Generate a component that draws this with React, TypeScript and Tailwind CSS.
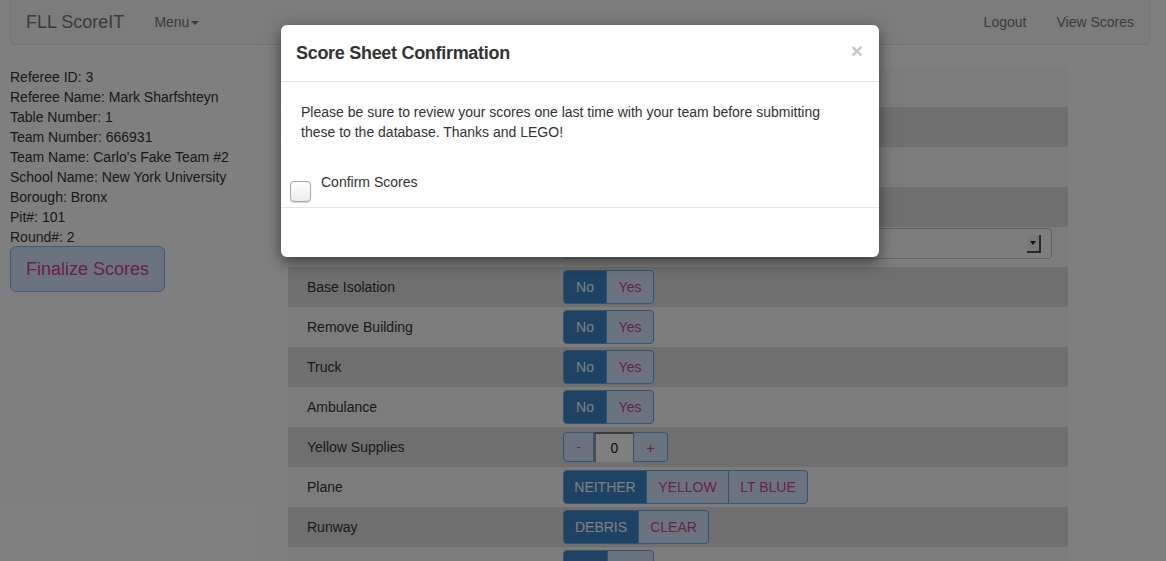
import React from 'react';

// Referee / team details shown in the left column
const info = [
  'Referee ID: 3',
  'Referee Name: Mark Sharfshteyn',
  'Table Number: 1',
  'Team Number: 666931',
  "Team Name: Carlo's Fake Team #2",
  'School Name: New York University',
  'Borough: Bronx',
  'Pit#: 101',
  'Round#: 2',
];

type Row =
  | { label: string; kind: 'toggle'; options: string[]; widths: number[]; top?: boolean }
  | { label: string; kind: 'counter' }
  | { label: string; kind: 'select' }
  | { label: string; kind: 'blank' };

// rows 1-5 sit behind the modal, so their labels are left out
const rows: Row[] = [
  { label: '', kind: 'blank' },
  { label: '', kind: 'blank' },
  { label: '', kind: 'blank' },
  { label: '', kind: 'blank' },
  { label: '', kind: 'select' },
  { label: 'Base Isolation', kind: 'toggle', options: ['No', 'Yes'], widths: [44, 48] },
  { label: 'Remove Building', kind: 'toggle', options: ['No', 'Yes'], widths: [44, 48] },
  { label: 'Truck', kind: 'toggle', options: ['No', 'Yes'], widths: [44, 48] },
  { label: 'Ambulance', kind: 'toggle', options: ['No', 'Yes'], widths: [44, 48] },
  { label: 'Yellow Supplies', kind: 'counter' },
  { label: 'Plane', kind: 'toggle', options: ['NEITHER', 'YELLOW', 'LT BLUE'], widths: [84, 83, 80] },
  { label: 'Runway', kind: 'toggle', options: ['DEBRIS', 'CLEAR'], widths: [76, 71] },
  { label: '', kind: 'toggle', options: ['', ''], widths: [45, 47], top: true },
];

const Toggle = ({ options, widths }: { options: string[]; widths: number[] }) => (
  <div className="flex h-[34px]">
    {options.map((opt, i) => (
      <div
        key={i}
        style={{ width: widths[i] }}
        className={`flex items-center justify-center border border-[#5fa8ec] text-[14px] ${
          i === 0 ? 'rounded-l-[4px] bg-[#3a85c6] text-white' : 'bg-[#d7e9fc] text-[#d43e90]'
        } ${i === options.length - 1 ? 'rounded-r-[4px]' : ''} ${i > 0 ? '-ml-px' : ''}`}
      >
        {opt}
      </div>
    ))}
  </div>
);

const Counter = () => (
  <div className="flex h-[30px]">
    <div className="flex w-[31px] items-center justify-center rounded-l-[4px] border border-[#5fa8ec] bg-[#d7e9fc] text-[14px] text-[#d43e90]">
      -
    </div>
    <div className="flex w-[39px] items-center justify-center border-t-2 border-l-2 border-t-[#777] border-l-[#999] bg-white text-[14px] text-[#222]">
      0
    </div>
    <div className="flex w-[35px] items-center justify-center rounded-r-[4px] border border-[#5fa8ec] bg-[#d7e9fc] pt-[3px] text-[14px] text-[#d43e90]">
      +
    </div>
  </div>
);

const Select = () => (
  <div className="mt-[1px] flex h-[31px] w-[489px] items-center justify-end rounded-[4px] border border-[#c4c4c4] bg-[#fbfbfb] pr-[10px]">
    <div className="flex h-[18px] w-[14px] items-center justify-center border-r-2 border-b-2 border-r-[#555] border-b-[#555] bg-[#f2f2f2]">
      <div className="h-0 w-0 border-x-[3px] border-t-[4px] border-x-transparent border-t-[#222]" />
    </div>
  </div>
);

export default function App() {
  return (
    <div className="relative h-[561px] w-[1166px] overflow-hidden bg-white font-['Liberation_Sans',Arial,sans-serif]">
      {/* navbar */}
      <nav className="ml-[10px] flex h-[45px] w-[1140px] items-center rounded-b-[4px] border-x border-b border-[#e7e7e7] bg-[#f8f8f8] text-[#777]">
        <span className="ml-[15px] text-[18px]">FLL ScoreIT</span>
        <span className="ml-[30px] flex items-center text-[14px]">
          Menu
          <span className="ml-[2px] mt-[2px] h-0 w-0 border-x-[4px] border-t-[4px] border-x-transparent border-t-[#777]" />
        </span>
        <span className="ml-auto text-[14px]">Logout</span>
        <span className="ml-[30px] mr-[15px] text-[14px]">View Scores</span>
      </nav>

      <div className="mt-[21px] flex">
        {/* left column */}
        <div className="w-[288px] pl-[10px] pt-[1px]">
          <div className="text-[14px] leading-[20px] text-[#333]">
            {info.map((line) => (
              <div key={line}>{line}</div>
            ))}
          </div>
          <button className="mt-[-1px] h-[46px] w-[155px] rounded-[6px] border border-[#78b9f6] bg-[#d4e6fc] text-[18px] text-[#d63e94]">
            Finalize Scores
          </button>
        </div>

        {/* score table */}
        <div className="w-[780px] pt-[1px]">
          {rows.map((row, i) => (
            <div
              key={i}
              className={`flex h-[40px] ${i % 2 === 0 ? 'bg-[#f9f9f9]' : 'bg-[#dedede]'} ${
                row.kind === 'select' || (row.kind === 'toggle' && row.top) ? 'items-start' : 'items-center'
              }`}
            >
              <div className="w-[275px] pl-[19px] text-[14px] text-[#333]">{row.label}</div>
              <div className={row.kind === 'toggle' && row.top ? 'pt-[3px]' : ''}>
                {row.kind === 'toggle' && <Toggle options={row.options} widths={row.widths} />}
                {row.kind === 'counter' && <Counter />}
                {row.kind === 'select' && <Select />}
              </div>
            </div>
          ))}
        </div>
      </div>

      {/* modal backdrop */}
      <div className="absolute inset-0 bg-black/50" />

      {/* confirmation modal */}
      <div className="absolute left-[281px] top-[25px] w-[598px] rounded-[6px] bg-white text-[#333] shadow-[0_5px_15px_rgba(0,0,0,0.5)]">
        <div className="flex h-[57px] items-center justify-between border-b border-[#e5e5e5] px-[15px]">
          <h4 className="text-[18px] font-bold tracking-[-0.3px]">Score Sheet Confirmation</h4>
          <span className="-mt-[6px] mr-[1px] text-[21px] font-bold leading-none text-[#c7c7c7]">×</span>
        </div>
        <div className="px-[20px] pt-[20px] pb-[5px] text-[14px] leading-[20px]">
          <p>
            Please be sure to review your scores one last time with your team before submitting
            <br />
            these to the database. Thanks and LEGO!
          </p>
          <div className="relative mt-[30px] h-[30px] pl-[20px]">
            <div className="absolute left-[-11px] top-[9px] h-[21px] w-[21px] rounded-[4px] border border-[#a8a8a8] bg-gradient-to-b from-white to-[#ececec] shadow-[0_1px_1px_rgba(0,0,0,0.15)]" />
            <label>Confirm Scores</label>
          </div>
        </div>
        <div className="h-[50px] border-t border-[#e5e5e5]" />
      </div>
    </div>
  );
}
